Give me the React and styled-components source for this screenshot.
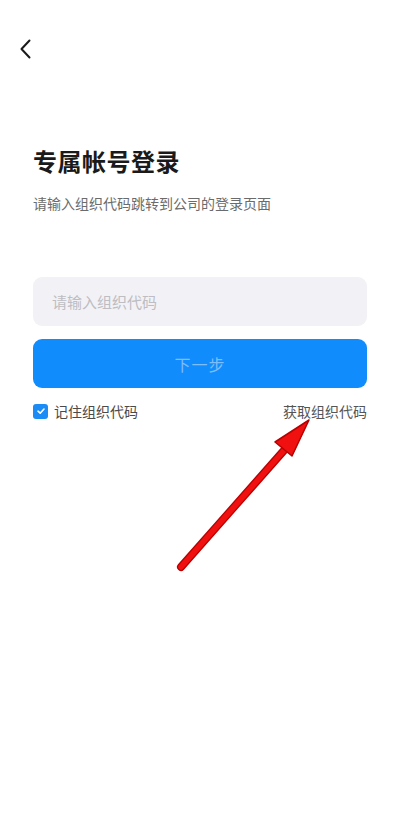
import styled, { createGlobalStyle } from "styled-components";

const Global = createGlobalStyle`
  html, body {
    margin: 0;
    padding: 0;
    background: #fff;
    font-family: "Noto Sans CJK SC", "Noto Sans", sans-serif;
  }
`

const Page = styled.div`
  position: relative;
  width: 400px;
  height: 816px;
  overflow: hidden;
  background: #fff;
`

const TopBar = styled.div`
  height: 100px;
  padding: 38px 0 0 18px;
  box-sizing: border-box;
`

const BackButton = styled.button`
  border: none;
  background: none;
  padding: 0;
  width: 16px;
  height: 22px;
  display: flex;
  cursor: pointer;
`

const Content = styled.div`
  padding: 44px 33px 0 33px;
  display: flex;
  flex-direction: column;
`

const Title = styled.h1`
  margin: 0;
  font-size: 24px;
  line-height: 34px;
  font-weight: 700;
  color: #1a1a1a;
  letter-spacing: 0.5px;
`

const Subtitle = styled.p`
  margin: 15px 0 0;
  font-size: 14px;
  line-height: 20px;
  color: #6b6b6b;
`

const Input = styled.input`
  margin-top: 64px;
  height: 49px;
  border: none;
  border-radius: 9px;
  background: #f2f2f6;
  padding: 0 19px;
  font-family: inherit;
  font-size: 15px;
  color: #333;
  outline: none;
  &::placeholder {
    color: #bdbdc3;
  }
`

const NextButton = styled.button`
  margin-top: 13px;
  height: 49px;
  border: none;
  border-radius: 9px;
  background: #118cfd;
  color: #7dbdfa;
  font-family: inherit;
  font-size: 16px;
  letter-spacing: 1px;
`

const OptionRow = styled.div`
  margin-top: 13px;
  display: flex;
  align-items: center;
  justify-content: space-between;
  font-size: 14px;
  line-height: 20px;
`

const Remember = styled.label`
  display: flex;
  align-items: center;
  gap: 6px;
  color: #4a4a4a;
`

const Check = styled.span`
  width: 15px;
  height: 15px;
  border-radius: 3px;
  background: #1b8cf5;
  display: flex;
  align-items: center;
  justify-content: center;
`

const LinkText = styled.span`
  color: #555;
`

const Arrow = styled.svg`
  position: absolute;
  left: 0;
  top: 0;
  pointer-events: none;
`

function App() {
  return (
    <Page>
      <Global />
      <TopBar>
        <BackButton aria-label="back">
          <svg width="16" height="22" viewBox="0 0 16 22">
            <path d="M11.5 2.5 L3.5 11 L11.5 19.5" fill="none" stroke="#1a1a1a" strokeWidth="2" strokeLinecap="round" strokeLinejoin="round" />
          </svg>
        </BackButton>
      </TopBar>
      <Content>
        <Title>专属帐号登录</Title>
        <Subtitle>请输入组织代码跳转到公司的登录页面</Subtitle>
        <Input placeholder="请输入组织代码" />
        <NextButton>下一步</NextButton>
        <OptionRow>
          <Remember>
            <Check>
              <svg width="10" height="10" viewBox="0 0 10 10">
                <path d="M2 5.2 L4.2 7.2 L8 3" fill="none" stroke="#fff" strokeWidth="1.6" strokeLinecap="round" strokeLinejoin="round" />
              </svg>
            </Check>
            记住组织代码
          </Remember>
          <LinkText>获取组织代码</LinkText>
        </OptionRow>
      </Content>
      {/* red pointer drawn over the page */}
      <Arrow width="400" height="816" viewBox="0 0 400 816">
        <path d="M181 567 L287 447" stroke="#b80000" strokeWidth="8" strokeLinecap="round" />
        <path d="M181 567 L287 447" stroke="#f01010" strokeWidth="5.5" strokeLinecap="round" />
        <path d="M309 420 L275 442 L292 456 Z" fill="#f01010" stroke="#b80000" strokeWidth="1.5" strokeLinejoin="round" />
      </Arrow>
    </Page>
  );
}

export default App;
